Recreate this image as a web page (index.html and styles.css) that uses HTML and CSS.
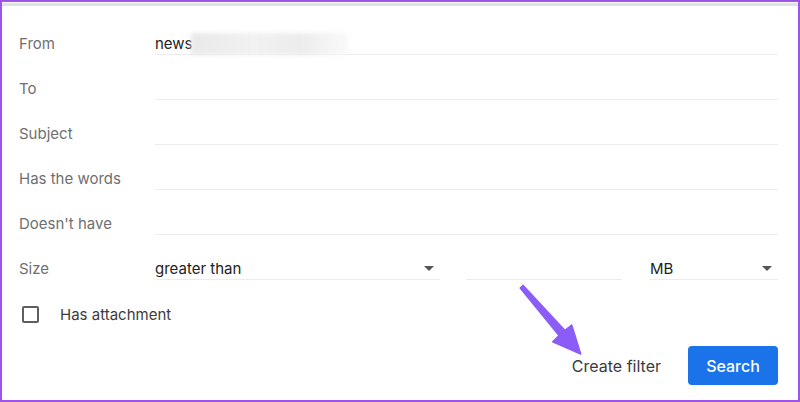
FILE: index.html
```html
<!DOCTYPE html>
<html>
<head>
<meta charset="utf-8">
<link rel="stylesheet" href="styles.css">
</head>
<body>
<div class="frame">
  <div class="topline"></div>
  <form class="form">
    <div class="row">
      <label class="label">From</label>
      <div class="field"><span class="value">news</span><span class="redact"></span></div>
    </div>
    <div class="row">
      <label class="label">To</label>
      <div class="field"></div>
    </div>
    <div class="row">
      <label class="label">Subject</label>
      <div class="field"></div>
    </div>
    <div class="row">
      <label class="label">Has the words</label>
      <div class="field"></div>
    </div>
    <div class="row">
      <label class="label">Doesn't have</label>
      <div class="field"></div>
    </div>
    <div class="row">
      <label class="label">Size</label>
      <div class="size">
        <div class="field select sel1"><span class="value">greater than</span><span class="caret"></span></div>
        <div class="field num"></div>
        <div class="field select sel2"><span class="value">MB</span><span class="caret"></span></div>
      </div>
    </div>
    <div class="check-row">
      <span class="checkbox"></span>
      <span class="check-label">Has attachment</span>
    </div>
    <div class="actions">
      <span class="create">Create filter</span>
      <button type="button" class="search">Search</button>
    </div>
  </form>
  <svg class="arrow" width="800" height="402" viewBox="0 0 800 402">
    <polygon points="520.2,288 523.2,285.4 565,330.4 571.7,325 580.7,354 552.7,341.7 559,335.6" fill="#8b5cf6" stroke="#8b5cf6" stroke-width="1.5" stroke-linejoin="round"/>
  </svg>
</div>
</body>
</html>
```

FILE: styles.css
```css
* { box-sizing: border-box; }
html, body { margin: 0; padding: 0; background: #fff; }
body { font-family: Inter, Roboto, Arial, sans-serif; }
.frame {
  position: relative;
  width: 800px;
  height: 402px;
  border: 2px solid #a052ee;
  overflow: hidden;
  background: #fff;
}
.topline { height: 3px; margin-top: 1px; background: #dfe1e5; }
.form { padding: 15px 20px 0 17px; }
.row {
  display: grid;
  grid-template-columns: 136px 1fr;
  align-items: center;
  height: 45px;
}
.label { font-size: 15px; color: #6f6f6f; }
.field {
  height: 22px;
  border-bottom: 1px solid #ececec;
  display: flex;
  align-items: center;
  font-size: 15px;
  color: #222;
}
.row .field { margin-top: 1px; }
.value { line-height: 20px; }
.redact {
  display: inline-block;
  width: 157px;
  height: 22px;
  margin-left: -2px;
  background: linear-gradient(90deg, #e9e9e9 0%, #f1f1f1 40%, #ececec 70%, #fafafa 100%);
  filter: blur(2px);
}
.size { display: flex; }
.size .field { margin-top: 1px; }
.select { justify-content: space-between; padding-right: 6px; }
.sel1 { width: 285px; }
.num { width: 156px; margin-left: 26px; }
.sel2 { width: 128px; margin-left: 28px; }
.caret {
  width: 0; height: 0;
  border-left: 5px solid transparent;
  border-right: 5px solid transparent;
  border-top: 5px solid #555;
}
.check-row {
  display: flex;
  align-items: center;
  height: 46px;
  padding-left: 3px;
}
.checkbox {
  width: 17px; height: 17px;
  border: 2px solid #5f5f5f;
  border-radius: 2px;
}
.check-label { margin-left: 21px; font-size: 15px; color: #3c3c3c; }
.actions {
  display: flex;
  justify-content: flex-end;
  align-items: center;
  margin-top: 9px;
}
.create { font-size: 16px; color: #3c3c3c; margin-right: 27px; }
.search {
  width: 90px; height: 39px;
  background: #1a73e8;
  color: #fff;
  border: none;
  border-radius: 4px;
  font-family: inherit;
  font-size: 16px;
  font-weight: 500;
}
.arrow { position: absolute; left: -2px; top: -2px; pointer-events: none; }
```
